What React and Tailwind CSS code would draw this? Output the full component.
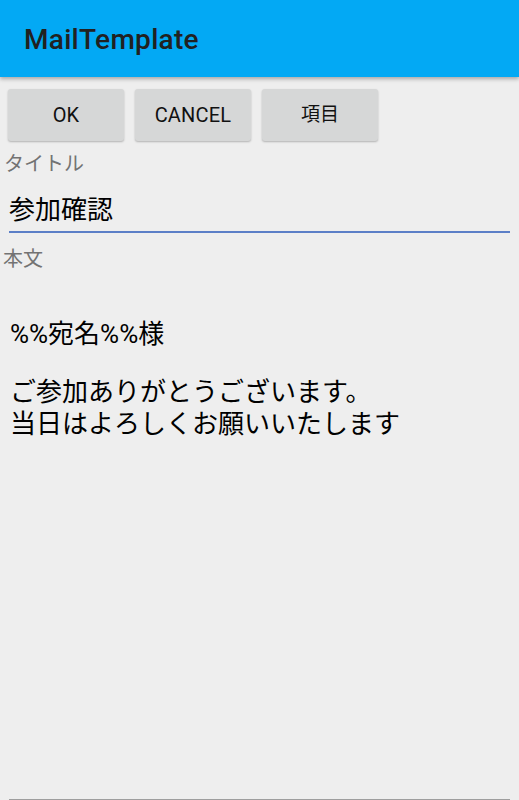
import React from "react";

const App = () => {
  return (
    <div className="w-[519px] h-[800px] bg-[#eeeeee] overflow-hidden flex flex-col font-['Roboto','Noto_Sans_CJK_JP',sans-serif]">
      <header className="h-[77px] shrink-0 bg-[#03a9f4] flex items-center pl-6 shadow-[0_2px_4px_rgba(0,0,0,0.3)] relative z-10">
        <h1 className="text-[28px] text-[#212121] font-medium leading-none pt-[2px] tracking-[0.3px]">MailTemplate</h1>
      </header>

      <div className="flex gap-[11px] pl-2 pt-3">
        <button className="w-[116px] h-[52px] bg-[#d6d7d7] rounded-[3px] shadow-[0_1px_2px_rgba(0,0,0,0.25)] text-[20px] font-normal tracking-[0.2px] text-[#111]">OK</button>
        <button className="w-[116px] h-[52px] bg-[#d6d7d7] rounded-[3px] shadow-[0_1px_2px_rgba(0,0,0,0.25)] text-[20px] font-normal tracking-[0.2px] text-[#111]">CANCEL</button>
        <button className="w-[116px] h-[52px] bg-[#d6d7d7] rounded-[3px] shadow-[0_1px_2px_rgba(0,0,0,0.25)] text-[19px] font-normal text-[#111]">項目</button>
      </div>

      <p className="pl-1 mt-[11px] text-[20px] leading-[24px] text-[#737373]">タイトル</p>
      <div className="mx-[9px] mt-[18px] border-b-2 border-[#5b7fc7] pb-[5px]">
        <p className="text-[26px] leading-[32px] text-black">参加確認</p>
      </div>
      <p className="pl-[3px] mt-[14px] text-[20px] leading-[24px] text-[#737373]">本文</p>

      <div className="flex-1 mx-[9px] mt-[47px] border-b border-[#9e9e9e] text-[26px] leading-[32px] text-black pl-[1px]">
        <p>%%宛名%%様</p>
        <p className="h-[26px]"></p>
        <p>ご参加ありがとうございます。</p>
        <p>当日はよろしくお願いいたします</p>
      </div>
    </div>
  );
};

export default App;
